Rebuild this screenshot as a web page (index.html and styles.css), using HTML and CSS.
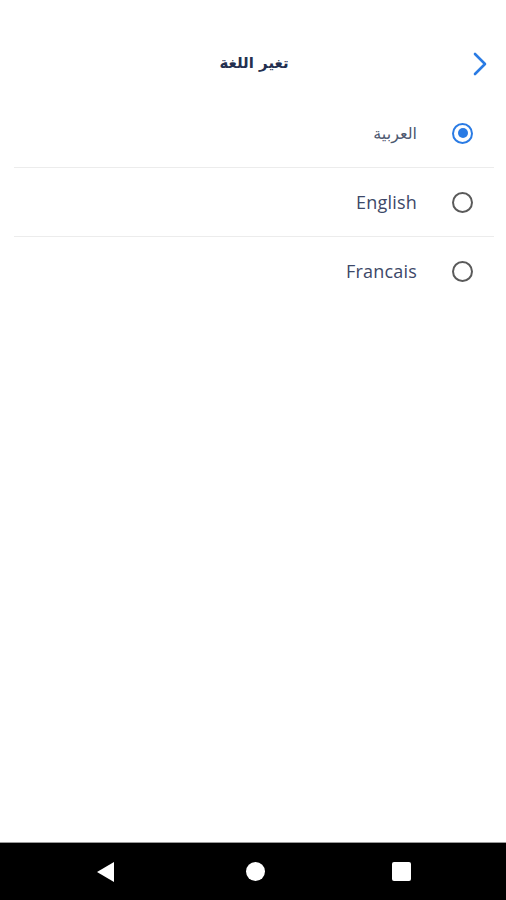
FILE: index.html
```html
<!DOCTYPE html>
<html lang="ar">
<head>
<meta charset="utf-8">
<link rel="stylesheet" href="styles.css">
</head>
<body>
<div class="screen">
  <header class="header">
    <h1 class="title">تغير اللغة</h1>
    <svg class="chevron" width="14" height="24" viewBox="0 0 14 24"><path d="M2 2 L12 12 L2 22" fill="none" stroke="#2a7be4" stroke-width="2.6" stroke-linecap="round" stroke-linejoin="round"/></svg>
  </header>
  <main class="list">
    <div class="row">
      <span class="radio checked"><span class="dot"></span></span>
      <span class="label ar">العربية</span>
    </div>
    <div class="row">
      <span class="radio"></span>
      <span class="label">English</span>
    </div>
    <div class="row last">
      <span class="radio"></span>
      <span class="label">Francais</span>
    </div>
  </main>
  <nav class="navbar">
    <svg width="20" height="22" viewBox="0 0 20 22"><path d="M18 1 L18 21 L1 11 Z" fill="#fff"/></svg>
    <span class="home"></span>
    <span class="recent"></span>
  </nav>
</div>
</body>
</html>
```
FILE: styles.css
```css
html, body { margin: 0; padding: 0; background: #fff; }
.screen {
  width: 506px;
  height: 900px;
  display: flex;
  flex-direction: column;
  font-family: "Open Sans", "Lato", sans-serif;
}
.header {
  position: relative;
  height: 48px;
  margin-top: 40px;
  margin-bottom: 11px;
  display: flex;
  align-items: center;
  justify-content: center;
}
.title {
  margin: 0;
  font-family: "DejaVu Sans", sans-serif;
  font-size: 15px;
  font-weight: bold;
  color: #243050;
  transform: translate(1px, -1px);
}
.chevron {
  position: absolute;
  right: 19px;
  top: 12px;
}
.list {
  flex: 1;
  display: flex;
  flex-direction: column;
  margin: 0 12px 0 14px;
}
.row {
  height: 68px;
  border-bottom: 1px solid #ececec;
  display: flex;
  flex-direction: row-reverse;
  align-items: center;
  padding-right: 21px;
  gap: 35px;
}
.row.last { border-bottom: none; }
.label {
  font-size: 18px;
  color: #3d4868;
  letter-spacing: 0.2px;
}
.label.ar {
  font-family: "DejaVu Sans", sans-serif;
  font-size: 16px;
  color: #4e586f;
  letter-spacing: 0;
}
.radio {
  width: 21px;
  height: 21px;
  box-sizing: border-box;
  border: 2px solid #5a5a5a;
  border-radius: 50%;
  display: flex;
  align-items: center;
  justify-content: center;
}
.radio.checked { border-color: #2a7be4; }
.dot {
  width: 10px;
  height: 10px;
  border-radius: 50%;
  background: #2a7be4;
}
.navbar {
  height: 57px;
  background: #000;
  border-top: 1px solid #9a9a9a;
  display: flex;
  align-items: center;
  padding-left: 96px;
}
.navbar svg { margin-right: 130px; }
.home {
  width: 19px;
  height: 19px;
  border-radius: 50%;
  background: #fff;
  margin-right: 127px;
}
.recent {
  width: 19px;
  height: 19px;
  border-radius: 2px;
  background: #fff;
}
```
